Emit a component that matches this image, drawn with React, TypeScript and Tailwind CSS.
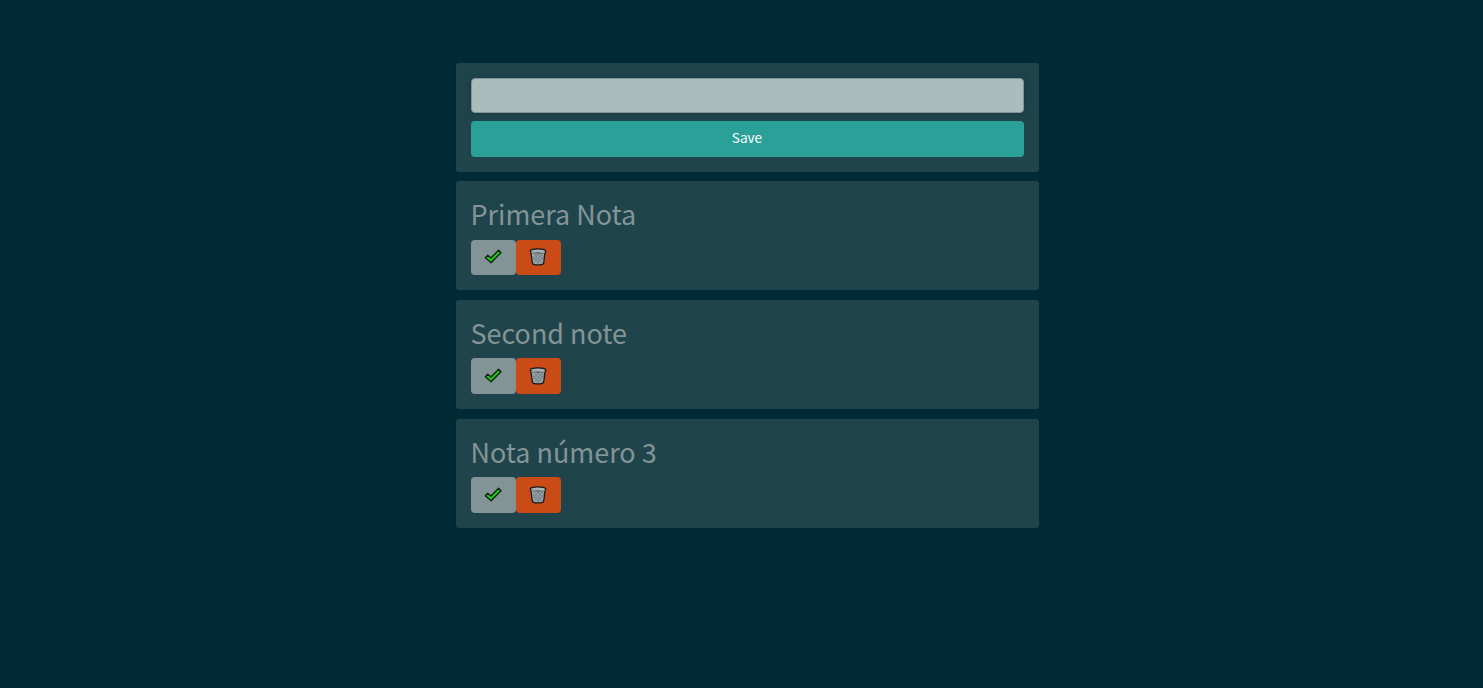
const notes = ['Primera Nota', 'Second note', 'Nota número 3'];

function Check() {
  return (
    <svg className="mr-[2px] block h-[16px] w-[18px]" viewBox="0 0 18 16">
      <path d="M1.3 8.7 3.7 6.3 6.9 9 14.6 1.3 17 3.7 7.1 13.7Z" fill="#22c022" stroke="#10210f" strokeWidth="1.3" strokeLinejoin="round" />
    </svg>
  );
}

function Trash() {
  return (
    <svg className="mr-[1px] block h-[18px] w-[18px]" viewBox="0 0 18 18">
      <path d="M1.8 3.6 3.3 14.8C3.9 17.6 14.1 17.6 14.7 14.8L16.2 3.6Z" fill="#9aa5ac" stroke="#15191b" strokeWidth="1.3" />
      <path d="M3.4 8 10 15.6M5 6 13 15M9 6 14.5 12.5M12.5 6 15 9M14.6 8 8 15.6M13 6 5 15M9 6 3.8 12.5" stroke="#67737a" strokeWidth=".8" fill="none" />
      <path d="M1.2 3.2C1.2 .1 16.8 .1 16.8 3.2C16.8 5.6 1.2 5.6 1.2 3.2Z" fill="#a9b2b7" stroke="#15191b" strokeWidth="1.4" />
      <path d="M2 3.8C4 5.4 14 5.4 16 3.8" stroke="#9aa5ac" strokeWidth="1.2" fill="none" />
    </svg>
  );
}

export default function App() {
  return (
    <div className="min-h-screen bg-[#002b36] pt-[63px] font-['Noto_Sans_CJK_SC',sans-serif] text-[#839496]">
      <main className="ml-[456px] flex w-[583px] flex-col gap-[9.75px]">
        <form className="-mb-[0.4px] h-[108.75px] rounded-[3px] bg-[#20444c] p-[15px]" onSubmit={(e) => e.preventDefault()}>
          <input aria-label="Note" className="block h-[35px] w-full rounded-[4px] border border-[#839496] bg-[#a9bdbd] px-3 text-sm shadow-[0_0_6px_rgba(0,43,54,0.5)] outline-none" />
          <button className="mt-2 flex h-[36px] w-full items-center justify-center rounded-[4px] bg-[#2aa198] pr-px pb-[2px] text-[13.6px] leading-none text-white">Save</button>
        </form>
        {notes.map((note) => (
          <article key={note} className="h-[109px] rounded-[3px] bg-[#20444c] p-[15px]">
            <h1 className="-ml-[0.5px] flex h-[35.5px] items-center pt-[2px] text-[26.95px] leading-none whitespace-nowrap">{note}</h1>
            <div className="mt-[8px] flex">
              <button aria-label="Complete" className="flex h-[35.6px] w-[45px] items-center justify-center rounded-[4px] bg-[#839496]"><Check /></button>
              <button aria-label="Delete" className="flex h-[35.6px] w-[45px] items-center justify-center rounded-[4px] bg-[#cb4b16]"><Trash /></button>
            </div>
          </article>
        ))}
      </main>
    </div>
  );
}
